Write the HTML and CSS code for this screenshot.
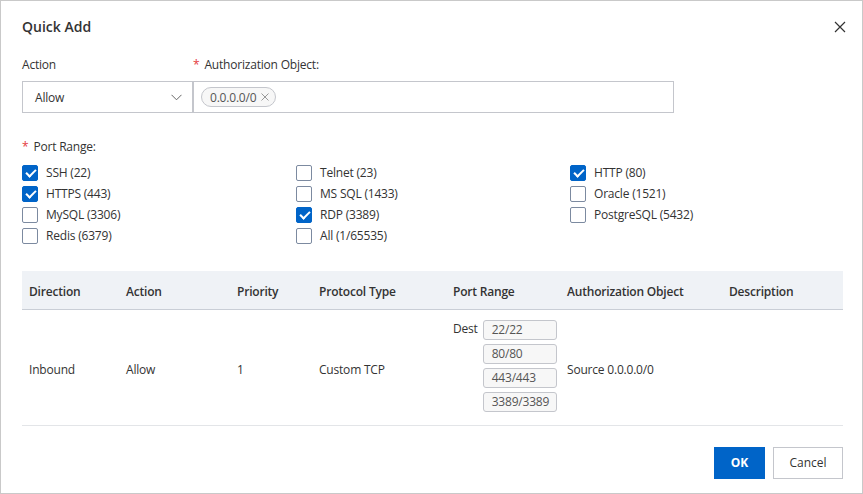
FILE: index.html
```html
<!DOCTYPE html>
<html>
<head>
<meta charset="utf-8">
<link rel="stylesheet" href="styles.css">
</head>
<body>
<div class="dialog">
  <div class="head">
    <div class="title">Quick Add</div>
    <svg class="close" width="12" height="12" viewBox="0 0 12 12"><path d="M1 1L11 11M11 1L1 11" stroke="#333" stroke-width="1.2" fill="none"/></svg>
  </div>

  <div class="fields">
    <div class="field sel-field">
      <div class="label">Action</div>
      <div class="select">
        <span>Allow</span>
        <svg width="11" height="7" viewBox="0 0 11 7"><path d="M0.5 0.8L5.5 5.8L10.5 0.8" stroke="#666" stroke-width="1" fill="none"/></svg>
      </div>
    </div>
    <div class="field obj-field">
      <div class="label"><span class="req">*</span>Authorization Object:</div>
      <div class="input">
        <span class="pill">0.0.0.0/0<svg width="8" height="8" viewBox="0 0 8 8"><path d="M0.5 0.5L7.5 7.5M7.5 0.5L0.5 7.5" stroke="#999" stroke-width="1" fill="none"/></svg></span>
      </div>
    </div>
  </div>

  <div class="label port-label"><span class="req">*</span>Port Range:</div>
  <div class="checks">
    <label class="cb"><span class="box on"></span>SSH (22)</label>
    <label class="cb"><span class="box"></span>Telnet (23)</label>
    <label class="cb"><span class="box on"></span>HTTP (80)</label>
    <label class="cb"><span class="box on"></span>HTTPS (443)</label>
    <label class="cb"><span class="box"></span>MS SQL (1433)</label>
    <label class="cb"><span class="box"></span>Oracle (1521)</label>
    <label class="cb"><span class="box"></span>MySQL (3306)</label>
    <label class="cb"><span class="box on"></span>RDP (3389)</label>
    <label class="cb"><span class="box"></span>PostgreSQL (5432)</label>
    <label class="cb"><span class="box"></span>Redis (6379)</label>
    <label class="cb"><span class="box"></span>All (1/65535)</label>
  </div>

  <table class="rules">
    <colgroup>
      <col class="c1"><col class="c2"><col class="c3"><col class="c4"><col class="c5"><col class="c6"><col>
    </colgroup>
    <thead>
      <tr><th>Direction</th><th>Action</th><th>Priority</th><th>Protocol Type</th><th>Port Range</th><th>Authorization Object</th><th>Description</th></tr>
    </thead>
    <tbody>
      <tr>
        <td>Inbound</td><td>Allow</td><td>1</td><td>Custom TCP</td>
        <td class="ports">
          <div class="port-wrap">
            <span class="dest">Dest</span>
            <div class="tags">
              <span class="tag">22/22</span>
              <span class="tag">80/80</span>
              <span class="tag">443/443</span>
              <span class="tag">3389/3389</span>
            </div>
          </div>
        </td>
        <td>Source 0.0.0.0/0</td><td></td>
      </tr>
    </tbody>
  </table>

  <div class="footer">
    <button class="btn primary">OK</button>
    <button class="btn">Cancel</button>
  </div>
</div>
</body>
</html>
```
FILE: styles.css
```css
* { box-sizing: border-box; }
html, body { margin: 0; padding: 0; background: #fff; }
body {
  font-family: "Open Sans", "Noto Sans", sans-serif;
  font-size: 12px;
  letter-spacing: -0.2px;
  color: #333;
}
.dialog {
  width: 863px;
  height: 494px;
  border: 1px solid #c9c9c9;
  padding: 16px 19px 0 21px;
  display: flex;
  flex-direction: column;
}
.head {
  display: flex;
  justify-content: space-between;
  align-items: center;
  height: 20px;
}
.title { font-size: 14px; font-weight: 600; line-height: 20px; letter-spacing: 0; }
.close { margin-right: -3px; }
.fields { display: flex; margin-top: 19px; }
.label { line-height: 18px; height: 18px; }
.req { color: #e4393c; margin-right: 5px; font-size: 12px; }
.sel-field { width: 171px; }
.obj-field { width: 481px; }
.select, .input {
  margin-top: 7px;
  height: 32px;
  border: 1px solid #c4c6cc;
  display: flex;
  align-items: center;
}
.select { padding: 0 10px 0 12px; justify-content: space-between; }
.input { padding-left: 7px; }
.pill {
  display: inline-flex;
  align-items: center;
  gap: 5px;
  height: 20px;
  padding: 0 6px 0 8px;
  border: 1px solid #c4c6cc;
  border-radius: 10px;
  background: #f7f7f7;
  color: #555;
}
.port-label { margin-top: 25px; }
.checks {
  margin-top: 6px;
  display: grid;
  grid-template-columns: 274px 274px 274px;
  grid-auto-rows: 21px;
}
.cb { display: flex; align-items: center; gap: 8px; color: #333; }
.box {
  width: 16px;
  height: 16px;
  border: 1px solid #7c8aa0;
  border-radius: 2px;
  background: #fff;
  position: relative;
}
.box.on { background: #0064c8; border-color: #0064c8; }
.box.on::after {
  content: "";
  position: absolute;
  left: 5px;
  top: 1.5px;
  width: 4px;
  height: 8px;
  border: solid #fff;
  border-width: 0 2px 2px 0;
  transform: rotate(45deg);
}
.rules {
  margin-top: 25px;
  width: 821px;
  border-collapse: collapse;
  table-layout: fixed;
}
.c1 { width: 97px; }
.c2 { width: 111px; }
.c3 { width: 82px; }
.c4 { width: 134px; }
.c5 { width: 114px; }
.c6 { width: 162px; }
.rules th {
  background: #eff2f6;
  height: 38px;
  text-align: left;
  font-weight: 600;
  padding: 3px 7px 0;
  border-bottom: 1px solid #c9ced6;
}
.rules td {
  padding: 4px 7px 0;
  border-bottom: 1px solid #e3e5e8;
  vertical-align: middle;
  height: 116px;
}
.rules td.ports { vertical-align: top; padding-top: 10px; }
.port-wrap { display: flex; gap: 5px; align-items: flex-start; }
.dest { line-height: 18px; }
.tags { display: flex; flex-direction: column; gap: 4px; }
.tag {
  width: 74px;
  height: 20px;
  line-height: 18px;
  padding-left: 8px;
  border: 1px solid #c4c6cc;
  border-radius: 3px;
  background: #f7f7f7;
  color: #555;
}
.footer {
  margin-top: 21px;
  display: flex;
  justify-content: flex-end;
  gap: 8px;
}
.btn {
  height: 32px;
  font-family: inherit;
  font-size: 12px;
  letter-spacing: 0;
  border: 1px solid #c4c6cc;
  background: #fff;
  color: #333;
  padding: 0;
  width: 70px;
}
.btn.primary {
  width: 51px;
  background: #0064c8;
  border-color: #0064c8;
  color: #fff;
  font-weight: 700;
}
```
